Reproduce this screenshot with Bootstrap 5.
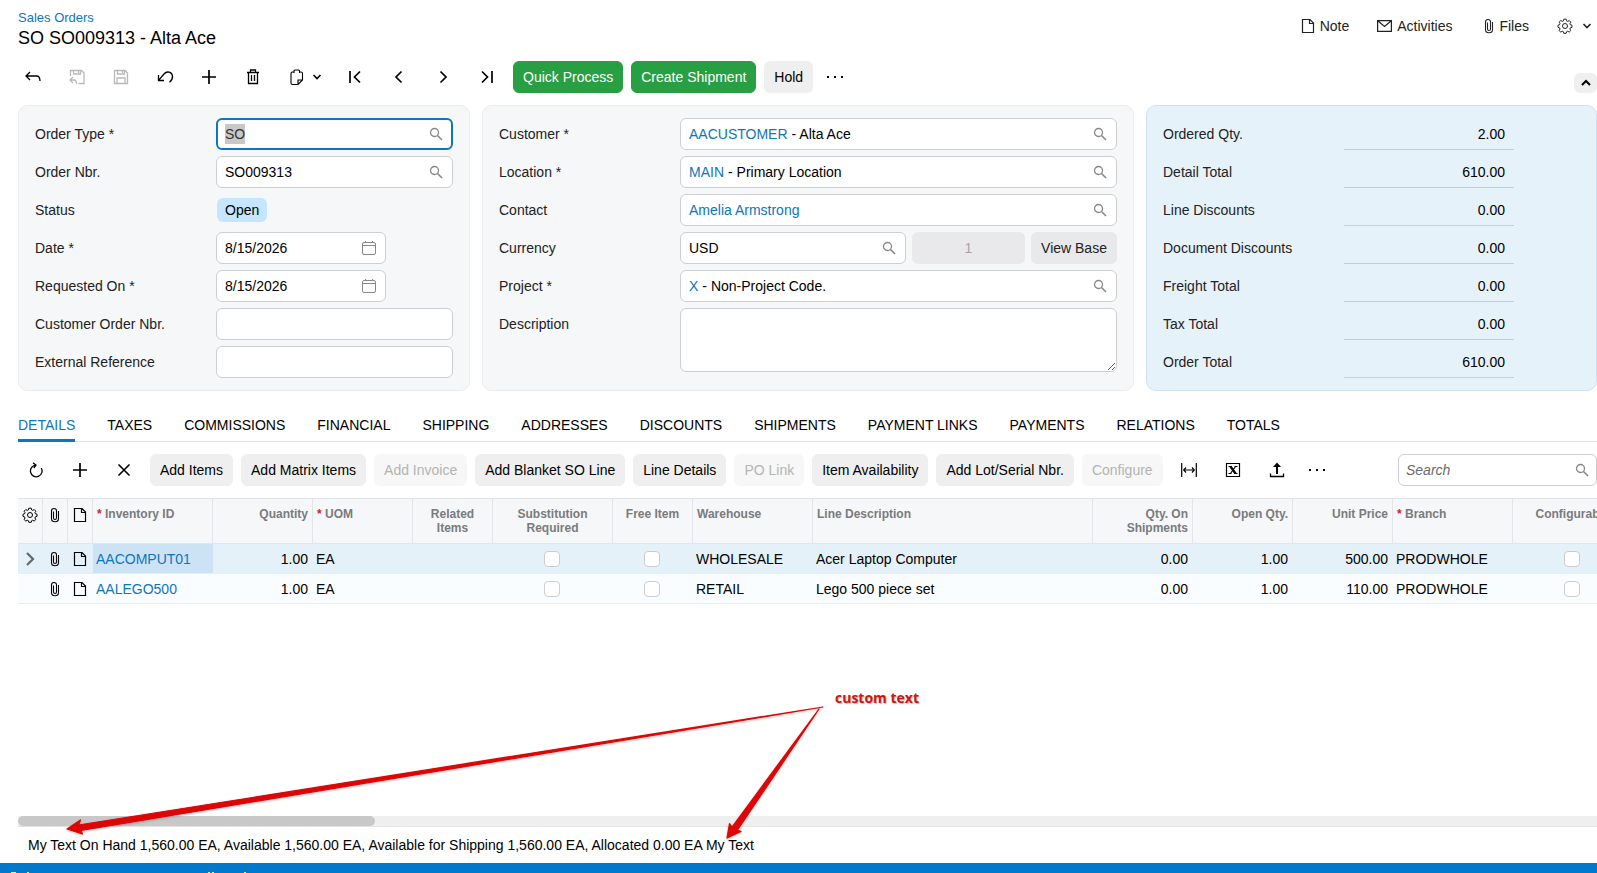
<!DOCTYPE html>
<html lang="en">
<head>
<meta charset="utf-8">
<meta name="viewport" content="width=device-width, initial-scale=1">
<title>SO SO009313 - Alta Ace</title>
<link href="https://cdn.jsdelivr.net/npm/bootstrap@5.3.0/dist/css/bootstrap.min.css" rel="stylesheet">
<style>
  :root { --blue: #0d76bd; --line: #cdcfd1; }
  body { font-family: "Liberation Sans", Arial, sans-serif; font-size: 14px; line-height: 20px; color: #000; background: #fff; }
  a { color: var(--blue); text-decoration: none; }
  .page { min-height: 100vh; position: relative; overflow: hidden; }
  .shell { padding-left: 18px; }
  svg { display: block; fill: none; stroke: currentColor; stroke-width: 1.3; }

  .crumb { font-size: 13px; }
  h1 { font-size: 18px; line-height: 20px; font-weight: 400; margin: 0; }
  .top-links { color: #222; padding-right: 5px; }
  .top-links .btn { color: #222; gap: 5px; }

  .btn { --bs-btn-font-size: 14px; --bs-btn-line-height: 20px; --bs-btn-padding-x: 9px; --bs-btn-padding-y: 5px; --bs-btn-border-radius: 6px; white-space: nowrap; flex: none; }
  .btn-plain { --bs-btn-padding-x: 0; --bs-btn-padding-y: 0; border: 0; color: #000; }
  .btn-tool { width: 36px; height: 32px; }
  .btn-copy { width: 50px; height: 32px; gap: 6px; padding-left: 6px; }
  .btn-dots { width: 28px; height: 32px; }
  .btn-go { background: #279f42; border-color: #279f42; color: #fff; }
  .btn-soft { background: #efefef; border-color: #efefef; color: #000; }
  .btn-soft:disabled { background: #f7f7f7; border-color: #f7f7f7; color: #b4b4b4; opacity: 1; }
  .btn-plain:disabled { border: 0; color: #b9b9b9; opacity: 1; }
  .actions { margin: 13px 0 12px -3px; }
  .btn-fold { width: 23px; height: 20px; background: #efefef; }

  .panels { display: grid; grid-template-columns: 452fr 652fr 451fr; gap: 12px; }
  .pane { background: #f5f7f9; border: 1px solid #eaecee; border-radius: 10px; padding: 12px 16px 6px; }
  .pane-sum { background: #e6f2fa; border-color: #cfe2ef; }
  .line { display: grid; grid-template-columns: 181px 1fr; align-items: center; min-height: 32px; margin-bottom: 6px; }
  .line label, .line .cap { color: #222; }
  .box { display: flex; align-items: center; height: 32px; border: 1px solid var(--line); border-radius: 6px; background: #fff; padding: 0 9px 0 8px; min-width: 0; }
  .box input { border: 0; outline: 0; padding: 0; background: none; flex: 1; min-width: 0; color: #000; }
  .box a + input { margin-left: 4px; }
  .box button { color: #888; }
  .box-focus { border: 2px solid var(--blue); padding: 0 8px 0 7px; }
  .box-focus input::selection { background: #c8c8c8; color: #333; }
  .box-date { width: 170px; padding-right: 8px; }
  .pill { background: #c5e6fe; border-radius: 6px; padding: 2px 8px; margin-left: 1px; justify-self: start; }
  .rate { width: 113px; height: 32px; border: 0; border-radius: 6px; background: #e9e9eb; color: #a5a5a5; text-align: center; }
  .btn-base { width: 86px; --bs-btn-padding-x: 0; background: #e9e9eb; border-color: #e9e9eb; color: #222; }
  textarea.memo { height: 64px; width: 100%; border: 1px solid var(--line); border-radius: 6px; background: #fff; display: block; }
  .line-memo { align-items: start; }
  .line-memo label { padding-top: 6px; }
  .total { width: 170px; height: 32px; border: 0; border-bottom: 1px solid #c3ced7; background: none; text-align: right; padding: 0 9px; }

  .tabs { gap: 32px; margin-top: 24px; border-bottom: 1px solid #dfe1e3; height: 27px; flex-wrap: nowrap; }
  .tabs a { color: #000; padding-bottom: 4px; height: 27px; white-space: nowrap; }
  .tabs a.active { color: var(--blue); border-bottom: 3px solid var(--blue); }
  .gridbar { margin: 12px 0; }
  .find { width: 199px; padding: 0 7px; }
  .find input::placeholder { color: #6b6b6b; font-style: italic; opacity: 1; }

  .sheet { overflow: hidden; }
  .grid { table-layout: fixed; width: 1615px; margin: 0; border-collapse: separate; border-spacing: 0; }
  .grid th { height: 46px; padding: 8px 4px; font-size: 12px; line-height: 14px; font-weight: 700; color: #797b7e; background: #f5f7f9; vertical-align: top; border: 1px solid #e2e5e8; border-width: 1px 1px 1px 0; }
  .grid th.glyph { color: #000; padding: 8px 0; }
  .grid td { height: 30px; padding: 0 5px 0 3px; white-space: nowrap; vertical-align: middle; background: #fafdff; border-bottom: 1px solid #e2eff7; }
  .grid td.glyph { padding: 0 1px 0 0; }
  .grid tr.on td { background: #e5f1f9; }
  .grid tr.on td.cell { background: #cce3f6; }
  .grid .glyph svg { margin: 0 auto; }
  .grid i { color: #d81e1e; font-style: normal; }
  .tick { appearance: none; width: 16px; height: 16px; border: 1px solid #cbcdcf; border-radius: 4px; background: #fff; display: block; margin: 0 auto; }

  .scroller { height: 10px; background: #efefef; }
  .thumb { height: 10px; width: 22.6%; border-radius: 5px; background: #c8c8c8; }
  .status { height: 37px; padding: 8px 10px; border-top: 1px solid #e4e4e4; line-height: 20px; }
  .dock { height: 10px; background: #0078cb; }
  .dock svg { fill: #d6eaf8; stroke: none; }
  .notes { position: absolute; left: 60px; bottom: 28px; width: 770px; height: 145px; pointer-events: none; }
  .notes span { position: absolute; left: 775px; top: -12px; font: 700 14px/20px "Open Sans", sans-serif; color: #d01515; white-space: nowrap; text-shadow: 1px 1px 1px #bbb; }
</style>
</head>
<body>
<svg width="0" height="0" class="position-absolute" aria-hidden="true">
  <symbol id="lens" viewBox="0 0 14 14"><circle cx="5.5" cy="5.5" r="4"/><path d="M8.5 8.5l4.500 4.500" stroke-width="1.600"/></symbol>
  <symbol id="cal" viewBox="0 0 16 16"><path d="M3 2.500h10a1.500 1.500 0 0 1 1.500 1.500v9a1.500 1.500 0 0 1-1.500 1.500H3A1.500 1.500 0 0 1 1.500 13V4A1.500 1.500 0 0 1 3 2.500zM1.500 5.500h13M4.500 1v1.500M11.500 1v1.500" stroke-width="1"/></symbol>
  <symbol id="page" viewBox="0 0 14 16"><path d="M1.500 1.500h7.500l3.500 3.500v9.500h-11zM8.500 1.500v4h4" stroke-width="1.200"/></symbol>
  <symbol id="clip" viewBox="0 0 10 16"><path d="M3.500 4.500v6.500a1.500 1.500 0 0 0 3 0v-7c0-3.300-5-3.300-5 0v7.500c0 4.400 7 4.400 7 0V4" stroke-width="1.100"/></symbol>
  <symbol id="gear" viewBox="0 0 16 16"><circle cx="8" cy="8" r="2.500" stroke-width="1"/><path d="M6.800 1.200h2.400l.4 1.700 1.100.5 1.500-.9 1.600 1.700-.8 1.400.4 1.200 1.600.4v2.200l-1.600.4-.5 1.200.9 1.500-1.600 1.600-1.500-.9-1.100.5-.4 1.600H6.800l-.4-1.600-1.200-.5-1.400.9-1.700-1.600.9-1.500-.5-1.200-1.500-.4V7.200l1.500-.4.5-1.200-.9-1.400 1.700-1.700 1.400.9 1.200-.5z" stroke-width="1"/></symbol>
  <symbol id="down" viewBox="0 0 10 8"><path d="M1.500 2L5 5.500 8.500 2" stroke-width="1.600"/></symbol>
  <symbol id="plus" viewBox="0 0 16 16"><path d="M8 1v14M1 8h14" stroke-width="1.700"/></symbol>
  <symbol id="dots" viewBox="0 0 16 4"><path d="M0 1h2v2H0zM7 1h2v2H7zM14 1h2v2h-2z" fill="currentColor" stroke="none"/></symbol>
</svg>

<div class="page d-flex flex-column">
  <div class="shell d-flex flex-column flex-grow-1">
    <header class="d-flex justify-content-between pt-2">
      <div>
        <a class="crumb d-block" href="#">Sales Orders</a>
        <h1>SO SO009313 - Alta Ace</h1>
      </div>
      <nav class="top-links d-flex align-items-center align-self-start pt-2">
        <button class="btn btn-plain d-flex align-items-center me-4"><svg width="14" height="16"><use href="#page"/></svg>Note</button>
        <button class="btn btn-plain d-flex align-items-center ms-1 me-4"><svg width="15" height="14" viewBox="0 0 15 14"><path d="M.6 1.600h13.800v10.800H.6zM1 2l6.500 5.500L14 2" stroke-width="1.200"/></svg>Activities</button>
        <button class="btn btn-plain d-flex align-items-center ms-2 me-4"><svg width="10" height="16"><use href="#clip"/></svg>Files</button>
        <button class="btn btn-plain d-flex align-items-center ms-1" aria-label="Settings"><svg width="16" height="16"><use href="#gear"/></svg><svg width="10" height="8" class="ms-1"><use href="#down"/></svg></button>
      </nav>
    </header>

    <div class="actions d-flex gap-2">
      <button class="btn btn-plain btn-tool d-flex align-items-center justify-content-center" aria-label="Back"><svg width="16" height="16" viewBox="0 0 16 16"><path d="M5 3L1 7l4 4M1 7h10.500q3.500 0 3.500 5"/></svg></button>
      <button class="btn btn-plain btn-tool d-flex align-items-center justify-content-center" aria-label="Save and close" disabled><svg width="16" height="16" viewBox="0 0 16 16"><path d="M1.500 7V1.500h11l2.500 2.500v10.500H9.500M4.500 1.500V5h7V1.500M9.500 2v2M4 8l-3 3 3 3M1 11h4q2.500 0 2.500 4"/></svg></button>
      <button class="btn btn-plain btn-tool d-flex align-items-center justify-content-center" aria-label="Save" disabled><svg width="16" height="16" viewBox="0 0 16 16"><path d="M1.500 1.500h10.500l2.500 2.500v10.500h-13zM4.500 1.500V5h7V1.500M9.500 2v2M4 14.500V9h8v5.500"/></svg></button>
      <button class="btn btn-plain btn-tool d-flex align-items-center justify-content-center" aria-label="Undo"><svg width="17" height="16" viewBox="0 0 17 16"><path d="M1.500 6v5.500H7M1.800 11.200L7 5c3-3.500 8-2 8.500 2 .3 2.500-1 4.500-3 6.300"/></svg></button>
      <button class="btn btn-plain btn-tool d-flex align-items-center justify-content-center" aria-label="Add"><svg width="16" height="16"><use href="#plus"/></svg></button>
      <button class="btn btn-plain btn-tool d-flex align-items-center justify-content-center" aria-label="Delete"><svg width="14" height="16" viewBox="0 0 14 16"><path d="M1 3.500h12M4.500 3V1h5v2M2.500 3.500v11h9v-11M5.500 6v6M8.500 6v6"/></svg></button>
      <button class="btn btn-plain btn-copy d-flex align-items-center" aria-label="Clipboard"><svg width="17" height="17" viewBox="0 0 17 17" class="ms-1"><path d="M5 3H3.500Q2 3 2 4.500V14q0 1.500 1.500 1.500H9l4.500-4.500V4.500Q13.500 3 12 3h-1.500M5 4V2q0-1 1-1h3.500q1 0 1 1v2M9 15.500V11h4.500" stroke-width="1.100"/></svg><svg width="10" height="8"><use href="#down"/></svg></button>
      <button class="btn btn-plain btn-tool d-flex align-items-center justify-content-center" aria-label="First"><svg width="14" height="14" viewBox="0 0 14 14"><path d="M2 1v12M12 1.500L6.500 7l5.500 5.500" stroke-width="1.700"/></svg></button>
      <button class="btn btn-plain btn-tool d-flex align-items-center justify-content-center" aria-label="Previous"><svg width="14" height="14" viewBox="0 0 14 14"><path d="M9.500 1.500L4 7l5.500 5.500" stroke-width="1.700"/></svg></button>
      <button class="btn btn-plain btn-tool d-flex align-items-center justify-content-center" aria-label="Next"><svg width="14" height="14" viewBox="0 0 14 14"><path d="M4.500 1.500L10 7l-5.500 5.500" stroke-width="1.700"/></svg></button>
      <button class="btn btn-plain btn-tool d-flex align-items-center justify-content-center" aria-label="Last"><svg width="14" height="14" viewBox="0 0 14 14"><path d="M12 1v12M2 1.500L7.500 7 2 12.500" stroke-width="1.700"/></svg></button>
      <button class="btn btn-go">Quick Process</button>
      <button class="btn btn-go">Create Shipment</button>
      <button class="btn btn-soft">Hold</button>
      <button class="btn btn-plain btn-dots d-flex align-items-center justify-content-center" aria-label="More"><svg width="16" height="4"><use href="#dots"/></svg></button>
      <button class="btn btn-plain btn-fold d-flex align-items-center justify-content-center ms-auto align-self-end" aria-label="Collapse"><svg width="12" height="8" viewBox="0 0 12 8"><path d="M2 6l4-4 4 4" stroke-width="2"/></svg></button>
    </div>

    <div class="panels">
      <section class="pane">
        <div class="line"><label for="otype">Order Type *</label><div class="box box-focus"><input id="otype" value="SO"><button class="btn btn-plain" aria-label="Look up"><svg width="14" height="14"><use href="#lens"/></svg></button></div></div>
        <div class="line"><label for="onbr">Order Nbr.</label><div class="box"><input id="onbr" value="SO009313"><button class="btn btn-plain" aria-label="Look up"><svg width="14" height="14"><use href="#lens"/></svg></button></div></div>
        <div class="line"><span class="cap">Status</span><span class="pill">Open</span></div>
        <div class="line"><label for="odate">Date *</label><div class="box box-date"><input id="odate" value="8/15/2026"><button class="btn btn-plain" aria-label="Calendar"><svg width="16" height="16"><use href="#cal"/></svg></button></div></div>
        <div class="line"><label for="rdate">Requested On *</label><div class="box box-date"><input id="rdate" value="8/15/2026"><button class="btn btn-plain" aria-label="Calendar"><svg width="16" height="16"><use href="#cal"/></svg></button></div></div>
        <div class="line"><label for="cnbr">Customer Order Nbr.</label><div class="box"><input id="cnbr"></div></div>
        <div class="line"><label for="eref">External Reference</label><div class="box"><input id="eref"></div></div>
      </section>
      <section class="pane">
        <div class="line"><label for="cust">Customer *</label><div class="box"><a href="#">AACUSTOMER</a><input id="cust" value="- Alta Ace"><button class="btn btn-plain" aria-label="Look up"><svg width="14" height="14"><use href="#lens"/></svg></button></div></div>
        <div class="line"><label for="loc">Location *</label><div class="box"><a href="#">MAIN</a><input id="loc" value="- Primary Location"><button class="btn btn-plain" aria-label="Look up"><svg width="14" height="14"><use href="#lens"/></svg></button></div></div>
        <div class="line"><label for="cont">Contact</label><div class="box"><a href="#">Amelia Armstrong</a><input id="cont"><button class="btn btn-plain" aria-label="Look up"><svg width="14" height="14"><use href="#lens"/></svg></button></div></div>
        <div class="line"><label for="cur">Currency</label><div class="d-flex" style="gap:6px"><div class="box flex-grow-1"><input id="cur" value="USD"><button class="btn btn-plain" aria-label="Look up"><svg width="14" height="14"><use href="#lens"/></svg></button></div><input class="rate" value="1" disabled aria-label="Currency rate"><button class="btn btn-base">View Base</button></div></div>
        <div class="line"><label for="proj">Project *</label><div class="box"><a href="#">X</a><input id="proj" value="- Non-Project Code."><button class="btn btn-plain" aria-label="Look up"><svg width="14" height="14"><use href="#lens"/></svg></button></div></div>
        <div class="line line-memo"><label for="desc">Description</label><textarea class="memo" id="desc"></textarea></div>
      </section>
      <section class="pane pane-sum">
        <div class="line"><label for="t1">Ordered Qty.</label><input class="total" id="t1" value="2.00" readonly></div>
        <div class="line"><label for="t2">Detail Total</label><input class="total" id="t2" value="610.00" readonly></div>
        <div class="line"><label for="t3">Line Discounts</label><input class="total" id="t3" value="0.00" readonly></div>
        <div class="line"><label for="t4">Document Discounts</label><input class="total" id="t4" value="0.00" readonly></div>
        <div class="line"><label for="t5">Freight Total</label><input class="total" id="t5" value="0.00" readonly></div>
        <div class="line"><label for="t6">Tax Total</label><input class="total" id="t6" value="0.00" readonly></div>
        <div class="line"><label for="t7">Order Total</label><input class="total" id="t7" value="610.00" readonly></div>
      </section>
    </div>

    <nav class="tabs d-flex">
      <a class="active" href="#">DETAILS</a><a href="#">TAXES</a><a href="#">COMMISSIONS</a><a href="#">FINANCIAL</a><a href="#">SHIPPING</a><a href="#">ADDRESSES</a><a href="#">DISCOUNTS</a><a href="#">SHIPMENTS</a><a href="#">PAYMENT LINKS</a><a href="#">PAYMENTS</a><a href="#">RELATIONS</a><a href="#">TOTALS</a>
    </nav>

    <div class="gridbar d-flex gap-2">
      <button class="btn btn-plain btn-tool d-flex align-items-center justify-content-center" aria-label="Refresh"><svg width="16" height="16" viewBox="0 0 16 16"><path d="M8 3.200A5.800 5.800 0 1 0 13.200 6M5 .8l3 2.400L5.800 6"/></svg></button>
      <button class="btn btn-plain btn-tool d-flex align-items-center justify-content-center" aria-label="Add row"><svg width="16" height="16"><use href="#plus"/></svg></button>
      <button class="btn btn-plain btn-tool d-flex align-items-center justify-content-center" aria-label="Delete row"><svg width="14" height="14" viewBox="0 0 14 14"><path d="M1.500 1.500l11 11M12.500 1.500l-11 11" stroke-width="1.600"/></svg></button>
      <button class="btn btn-soft">Add Items</button>
      <button class="btn btn-soft">Add Matrix Items</button>
      <button class="btn btn-soft" disabled>Add Invoice</button>
      <button class="btn btn-soft">Add Blanket SO Line</button>
      <button class="btn btn-soft">Line Details</button>
      <button class="btn btn-soft" disabled>PO Link</button>
      <button class="btn btn-soft">Item Availability</button>
      <button class="btn btn-soft">Add Lot/Serial Nbr.</button>
      <button class="btn btn-soft" disabled>Configure</button>
      <button class="btn btn-plain btn-tool d-flex align-items-center justify-content-center" aria-label="Fit columns"><svg width="16" height="16" viewBox="0 0 16 16"><path d="M.7 1v14M15.300 1v14M3 8h10M5 5.500L2.700 8 5 10.500M11 5.500L13.300 8 11 10.500" stroke-width="1.200"/></svg></button>
      <button class="btn btn-plain btn-tool d-flex align-items-center justify-content-center" aria-label="Export to Excel"><svg width="16" height="16" viewBox="0 0 16 16"><path d="M1.500 1.500h13v13h-13zM10.500 4.500l-5 7M3.500 4.500H7M9.500 4.500h3M3.500 11.500h3M9 11.500h3.500" stroke-width="1.200"/><path d="M5.500 4.500l5 7" stroke-width="2.200"/></svg></button>
      <button class="btn btn-plain btn-tool d-flex align-items-center justify-content-center" aria-label="Upload"><svg width="16" height="16" viewBox="0 0 16 16"><path d="M1.500 11.500v3h13v-3"/><path d="M8 12V3" stroke-width="2"/><path d="M4 5l4-4.500L12 5z" fill="currentColor" stroke="none"/></svg></button>
      <button class="btn btn-plain btn-dots d-flex align-items-center justify-content-center" aria-label="More"><svg width="16" height="4"><use href="#dots"/></svg></button>
      <div class="box find ms-auto"><input type="text" placeholder="Search" aria-label="Search"><button class="btn btn-plain" aria-label="Search"><svg width="14" height="14"><use href="#lens"/></svg></button></div>
    </div>

    <div class="sheet flex-grow-1">
      <table class="grid">
        <colgroup><col width="25"><col width="25"><col width="25"><col width="120"><col width="100"><col width="100"><col width="80"><col width="120"><col width="80"><col width="120"><col width="280"><col width="100"><col width="100"><col width="100"><col width="120"><col width="120"></colgroup>
        <thead>
          <tr>
            <th class="glyph" aria-label="Settings"><svg width="16" height="16"><use href="#gear"/></svg></th>
            <th class="glyph" aria-label="Files"><svg width="10" height="16"><use href="#clip"/></svg></th>
            <th class="glyph" aria-label="Notes"><svg width="14" height="16"><use href="#page"/></svg></th>
            <th><i>*</i> Inventory ID</th>
            <th class="text-end">Quantity</th>
            <th><i>*</i> UOM</th>
            <th class="text-center">Related Items</th>
            <th class="text-center">Substitution Required</th>
            <th class="text-center">Free Item</th>
            <th>Warehouse</th>
            <th>Line Description</th>
            <th class="text-end">Qty. On Shipments</th>
            <th class="text-end">Open Qty.</th>
            <th class="text-end">Unit Price</th>
            <th><i>*</i> Branch</th>
            <th class="text-center">Configurable</th>
          </tr>
        </thead>
        <tbody>
          <tr class="on">
            <td class="glyph"><svg width="12" height="14" viewBox="0 0 12 14" color="#666"><path d="M3 1l6 6-6 6" stroke-width="2.200"/></svg></td>
            <td class="glyph"><svg width="10" height="16"><use href="#clip"/></svg></td>
            <td class="glyph"><svg width="14" height="16"><use href="#page"/></svg></td>
            <td class="cell"><a href="#">AACOMPUT01</a></td><td class="text-end">1.00</td><td>EA</td><td></td>
            <td><input class="tick" type="checkbox" aria-label="Substitution required, line 1"></td>
            <td><input class="tick" type="checkbox" aria-label="Free item, line 1"></td>
            <td>WHOLESALE</td><td>Acer Laptop Computer</td>
            <td class="text-end">0.00</td><td class="text-end">1.00</td><td class="text-end">500.00</td><td>PRODWHOLE</td>
            <td><input class="tick" type="checkbox" aria-label="Configurable, line 1"></td>
          </tr>
          <tr>
            <td></td>
            <td class="glyph"><svg width="10" height="16"><use href="#clip"/></svg></td>
            <td class="glyph"><svg width="14" height="16"><use href="#page"/></svg></td>
            <td><a href="#">AALEGO500</a></td><td class="text-end">1.00</td><td>EA</td><td></td>
            <td><input class="tick" type="checkbox" aria-label="Substitution required, line 2"></td>
            <td><input class="tick" type="checkbox" aria-label="Free item, line 2"></td>
            <td>RETAIL</td><td>Lego 500 piece set</td>
            <td class="text-end">0.00</td><td class="text-end">1.00</td><td class="text-end">110.00</td><td>PRODWHOLE</td>
            <td><input class="tick" type="checkbox" aria-label="Configurable, line 2"></td>
          </tr>
        </tbody>
      </table>
    </div>
    <div class="scroller"><div class="thumb"></div></div>
    <div class="status">My Text On Hand 1,560.00 EA, Available 1,560.00 EA, Available for Shipping 1,560.00 EA, Allocated 0.00 EA My Text</div>
  </div>
  <div class="dock"><svg width="260" height="10" aria-hidden="true"><path d="M11 9h5v1h-5zM27 9h2v1h-2zM208 9h2v1h-2zM212 9h2v1h-2zM244 9h2v1h-2z"/></svg></div>

  <div class="notes">
    <svg width="770" height="145" viewBox="0 0 770 145" color="#dd0606" style="filter:drop-shadow(0 1px 1px rgba(90,0,0,.3))">
      <path d="M7 129L20.500 120 18.500 125 763 7 21 130.500 22.500 134z" fill="currentColor" stroke-width="1.200" stroke-linejoin="round"/>
      <path d="M667 138L669.500 123.500 672 127 759 9 677.500 130 681 131.500z" fill="currentColor" stroke-width="1.200" stroke-linejoin="round"/>
    </svg>
    <span>custom text</span>
  </div>
</div>
<script src="https://cdn.jsdelivr.net/npm/bootstrap@5.3.0/dist/js/bootstrap.bundle.min.js"></script>
<script>
  // The key field starts out focused with its value selected.
  document.getElementById('otype').focus();
  document.getElementById('otype').select();
</script>
</body>
</html>
